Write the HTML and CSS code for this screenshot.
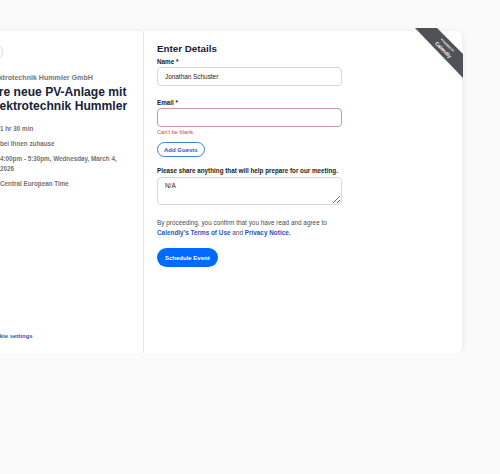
FILE: index.html
```html
<!DOCTYPE html>
<html lang="en">
<head>
    <meta charset="UTF-8">
    <meta name="viewport" content="width=device-width, initial-scale=1.0">
    <title>Enter Details</title>
    <link rel="stylesheet" href="styles.css">
</head>
<body>
    <div class="page">
        <div class="card">
            <aside class="event">
                <button class="back" type="button" aria-label="Back">
                    <svg width="8" height="8" viewBox="0 0 8 8"><path d="M6 4H2M4 2L2 4l2 2" fill="none" stroke="#0069ff" stroke-width="1"/></svg>
                </button>
                <div class="host">Elektrotechnik Hummler GmbH</div>
                <h1 class="title">Ihre neue PV-Anlage mit Elektrotechnik Hummler</h1>
                <ul class="details">
                    <li>
                        <svg width="9" height="9" viewBox="0 0 10 10"><circle cx="5" cy="5" r="4" fill="none" stroke="#737373"/><path d="M5 3v2.2l1.4 1" fill="none" stroke="#737373"/></svg>
                        <span>1 hr 30 min</span>
                    </li>
                    <li>
                        <svg width="9" height="9" viewBox="0 0 10 10"><path d="M5 9S2 6 2 4a3 3 0 0 1 6 0c0 2-3 5-3 5z" fill="none" stroke="#737373"/></svg>
                        <span>bei Ihnen zuhause</span>
                    </li>
                    <li>
                        <svg width="9" height="9" viewBox="0 0 10 10"><rect x="1" y="2" width="8" height="7" fill="none" stroke="#737373"/><path d="M1 4h8" stroke="#737373"/></svg>
                        <span>4:00pm - 5:30pm, Wednesday, March 4, 2026</span>
                    </li>
                    <li>
                        <svg width="9" height="9" viewBox="0 0 10 10"><circle cx="5" cy="5" r="4" fill="none" stroke="#737373"/><path d="M1 5h8M5 1c-2 2-2 6 0 8M5 1c2 2 2 6 0 8" fill="none" stroke="#737373"/></svg>
                        <span>Central European Time</span>
                    </li>
                </ul>
                <a class="cookie" href="#">Cookie settings</a>
            </aside>

            <main class="form-panel">
                <form class="booking">
                    <h2>Enter Details</h2>

                    <div class="field">
                        <label for="name">Name *</label>
                        <input type="text" id="name" name="name" value="Jonathan Schuster">
                    </div>

                    <div class="field email">
                        <label for="email">Email *</label>
                        <input class="invalid" type="email" id="email" name="email">
                        <div class="error">Can't be blank.</div>
                        <button class="guests" type="button">Add Guests</button>
                    </div>

                    <div class="field notes">
                        <label for="notes">Please share anything that will help prepare for our meeting.</label>
                        <textarea id="notes" name="notes">N/A</textarea>
                    </div>

                    <p class="legal">By proceeding, you confirm that you have read and agree to <a href="#">Calendly's Terms of Use</a> and <a href="#">Privacy Notice.</a></p>

                    <button class="submit" type="submit">Schedule Event</button>
                </form>
            </main>

            <div class="badge">
                <div class="badge-text">
                    <span>powered by</span>
                    <strong>Calendly</strong>
                </div>
            </div>
        </div>
    </div>
</body>
</html>
```

FILE: styles.css
```css
body {
    margin: 0;
    background-color: #fafafa;
    font-family: "Liberation Sans", Arial, sans-serif;
    overflow: hidden;
}
.page {
    padding-top: 31px;
}
.card {
    position: relative;
    display: flex;
    width: 502px;
    min-height: 322px;
    margin-left: -40px;
    background: #fff;
    border-radius: 6px;
    box-shadow: 0 1px 6px rgba(0, 0, 0, 0.09);
}

/* left column */
.event {
    position: relative;
    box-sizing: border-box;
    width: 184px;
    padding: 43px 12px 12px 28px;
    border-right: 1px solid #e7e7e7;
    display: flex;
    flex-direction: column;
}
.back {
    position: absolute;
    top: 12px;
    left: 25px;
    width: 18px;
    height: 18px;
    padding: 0;
    border: 1px solid #dcdcdc;
    border-radius: 50%;
    background: #fff;
    display: flex;
    align-items: center;
    justify-content: center;
}
.host {
    font-size: 7.1px;
    line-height: 9px;
    font-weight: bold;
    color: #767676;
}
.title {
    margin: 2px 0 0;
    font-size: 12.1px;
    line-height: 14px;
    color: #172236;
}
.details {
    list-style: none;
    margin: 11px 0 0;
    padding: 0;
}
.details li {
    display: flex;
    align-items: flex-start;
    gap: 3px;
    margin-bottom: 5px;
    font-size: 6.3px;
    line-height: 10px;
    font-weight: bold;
    color: #737373;
}
.details svg {
    flex: none;
    margin-top: 0.5px;
}
.cookie {
    margin-top: auto;
    font-size: 6px;
    line-height: 9px;
    font-weight: bold;
    color: #1f5ac4;
    text-decoration: none;
}

/* right column */
.form-panel {
    flex: 1;
    padding: 12px 0 0 13px;
}
.booking {
    width: 185px;
}
.booking h2 {
    margin: 0 0 2px;
    font-size: 9.8px;
    line-height: 12px;
    color: #172236;
}
.field {
    margin-bottom: 12px;
}
.field label {
    display: block;
    margin-bottom: 1px;
    font-size: 6.3px;
    line-height: 9px;
    font-weight: bold;
    color: #1a1a1a;
}
.field input {
    box-sizing: border-box;
    display: block;
    width: 100%;
    height: 19px;
    padding: 0 7px;
    border: 1px solid #d5d8dd;
    border-radius: 4px;
    font-family: inherit;
    font-size: 6.4px;
    color: #1a1a1a;
}
.field input.invalid {
    border-color: #cf9a9a;
}
.field.email {
    margin-bottom: 9px;
}
.error {
    margin-top: 1px;
    font-size: 5.7px;
    line-height: 9px;
    color: #c44b3a;
}
.guests {
    margin-top: 5px;
    height: 15px;
    padding: 0 6px;
    border: 1px solid #3d7fe0;
    border-radius: 8px;
    background: #fff;
    font-family: inherit;
    font-size: 6px;
    font-weight: bold;
    color: #1f5ac4;
}
.notes label {
    margin-bottom: 2px;
}
.notes textarea {
    box-sizing: border-box;
    display: block;
    width: 100%;
    height: 28px;
    padding: 3px 7px;
    border: 1px solid #d5d8dd;
    border-radius: 4px;
    font-family: inherit;
    font-size: 6.4px;
    line-height: 9px;
    color: #1a1a1a;
}
.legal {
    margin: 13px 0 0;
    font-size: 6.4px;
    line-height: 10px;
    color: #4a4d52;
}
.legal a {
    font-weight: bold;
    color: #1f56bd;
    text-decoration: none;
}
.submit {
    margin-top: 10px;
    height: 19px;
    padding: 0 8px;
    border: none;
    border-radius: 10px;
    background: #0069ff;
    font-family: inherit;
    font-size: 6px;
    font-weight: bold;
    color: #fff;
}

/* corner ribbon */
.badge {
    position: absolute;
    top: -3px;
    right: -1px;
    width: 48px;
    height: 50px;
    background: #4f5358;
    clip-path: polygon(0 0, 22px 0, 100% 26px, 100% 100%);
}
.badge-text {
    position: absolute;
    left: 30px;
    top: 20px;
    transform: translate(-50%, -50%) rotate(45deg);
    text-align: center;
    color: #fff;
    white-space: nowrap;
}
.badge-text span {
    display: block;
    font-size: 2.6px;
    line-height: 3.5px;
    font-weight: bold;
    text-transform: uppercase;
}
.badge-text strong {
    display: block;
    font-size: 5px;
    line-height: 6px;
}
```
